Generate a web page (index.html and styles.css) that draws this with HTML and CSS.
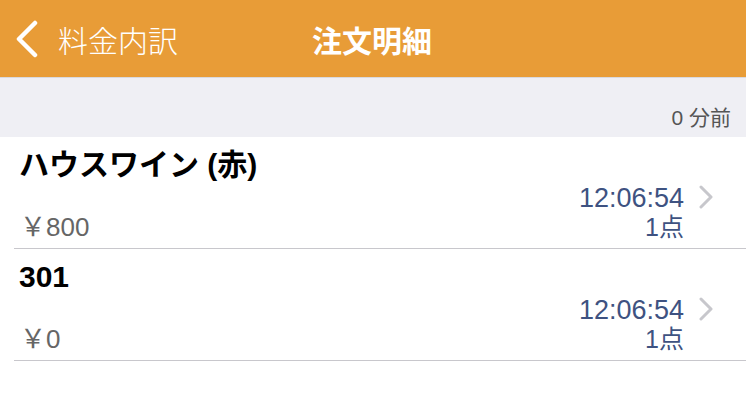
FILE: index.html
```html
<!DOCTYPE html>
<html lang="ja">
  <head>
    <meta charset="utf-8">
    <meta name="viewport" content="width=device-width, initial-scale=1">
    <link rel="stylesheet" href="styles.css">
    <title>注文明細</title>
  </head>
  <body>
    <header class="navbar">
      <a class="back" href="#">
        <svg class="back-icon" width="24" height="38" viewBox="0 0 24 38">
          <polyline points="20,3 4,19 20,35" fill="none" stroke="#fff" stroke-width="4.5" stroke-linecap="round" stroke-linejoin="round"/>
        </svg>
        <span>料金内訳</span>
      </a>
      <h1 class="title">注文明細</h1>
      <div class="spacer"></div>
    </header>

    <div class="section-head">0 分前</div>

    <ul class="orders">
      <li class="order">
        <div class="name">ハウスワイン (赤)</div>
        <div class="detail">
          <div class="price">￥800</div>
          <div class="meta">
            <div class="time">12:06:54</div>
            <div class="count">1点</div>
          </div>
          <svg class="chev" width="16" height="24" viewBox="0 0 16 24">
            <polyline points="3,2 13,12 3,22" fill="none" stroke="#c7c7cc" stroke-width="3" stroke-linecap="round" stroke-linejoin="round"/>
          </svg>
        </div>
      </li>
      <li class="order">
        <div class="name">301</div>
        <div class="detail">
          <div class="price">￥0</div>
          <div class="meta">
            <div class="time">12:06:54</div>
            <div class="count">1点</div>
          </div>
          <svg class="chev" width="16" height="24" viewBox="0 0 16 24">
            <polyline points="3,2 13,12 3,22" fill="none" stroke="#c7c7cc" stroke-width="3" stroke-linecap="round" stroke-linejoin="round"/>
          </svg>
        </div>
      </li>
    </ul>
  </body>
</html>
```

FILE: styles.css
```css
html, body {
    margin: 0; padding: 0;
    background: #fff;
    font-family: "Liberation Sans", "Noto Sans CJK JP", sans-serif;
}

.navbar {
    display: grid; grid-template-columns: 1fr auto 1fr;
    align-items: center;
    height: 77px; background: #e89c37;
    border-bottom: 1px solid #d9d9de;
}
.back {
    display: flex; align-items: center; gap: 19px;
    padding-left: 15px;
    color: #fff; text-decoration: none;
    font-size: 30px; font-weight: 300;
    font-family: "Noto Sans CJK JP", sans-serif;
}
.back-icon { display: block; }
.title {
    margin: 0 0 0 -2px; color: #fff;
    font-size: 30px; font-weight: 700;
    font-family: "Noto Sans CJK JP", sans-serif;
}

.section-head {
    height: 59px; background: #efeff4;
    display: flex; align-items: flex-end; justify-content: flex-end;
    padding: 0 15px 6px 0; box-sizing: border-box;
    color: #555; font-size: 21px;
}

.orders { list-style: none; margin: 0; padding: 0; }
.order {
    margin-left: 14px;
    padding: 8px 0 6px 5px;
    border-bottom: 1px solid #c8c7cc;
}
.name {
    line-height: 40px; font-size: 30px; font-weight: 700; color: #000;
}
.detail {
    display: flex; align-items: flex-start;
    padding-right: 32px;
}
.price {
    align-self: flex-end;
    flex: 1;
    line-height: 30px; font-size: 26px; color: #666;
    padding-left: 1px;
}
.meta { text-align: right; color: #3e5281; }
.time { line-height: 27px; font-size: 27px; }
.count { line-height: 30px; font-size: 25px; }
.chev { display: block; margin: 0 0 0 14px; }
```
